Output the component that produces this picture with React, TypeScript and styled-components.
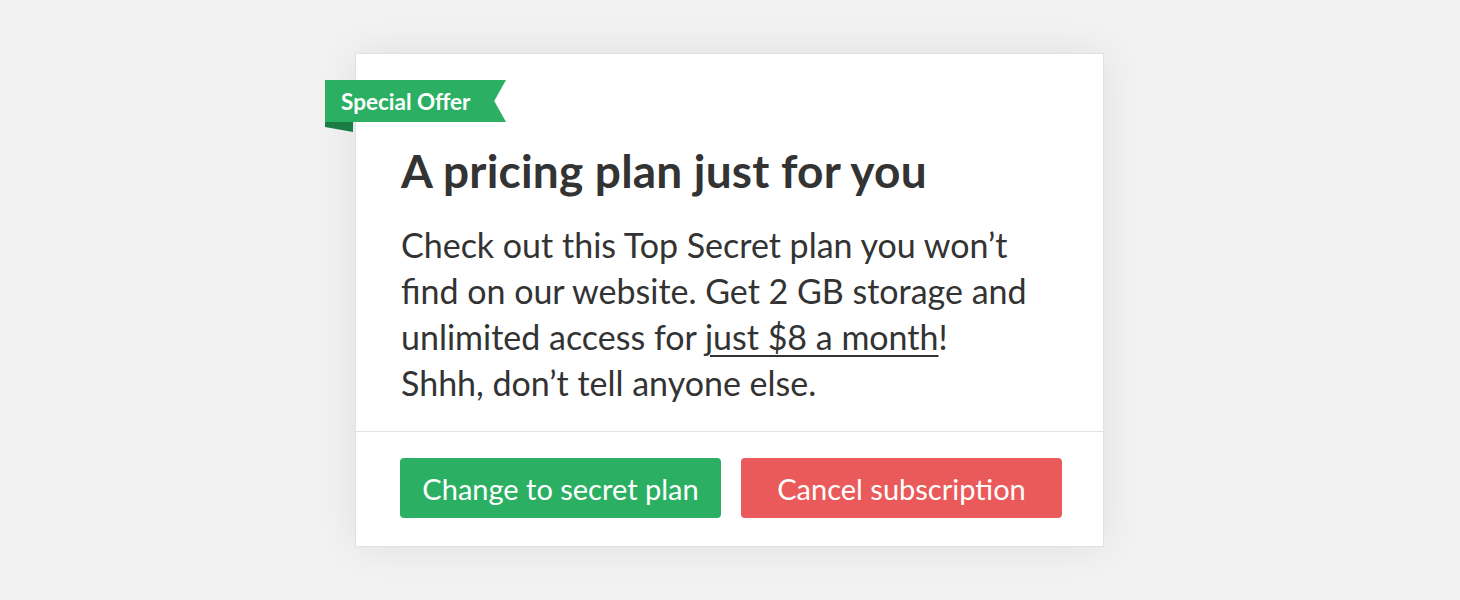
import React from "react";
import styled, { createGlobalStyle } from "styled-components";

const Global = createGlobalStyle`
  html, body { margin: 0; padding: 0; background: #f2f2f2; }
  body { font-family: Lato, "Noto Sans", sans-serif; color: #333; }
`;

const Page = styled.div`
  min-height: 600px;
  padding-right: 1px;
  display: flex;
  align-items: center;
  justify-content: center;
`;

const Card = styled.div`
  position: relative;
  box-sizing: border-box;
  width: 749px;
  height: 494px;
  background: #fff;
  border: 1px solid #e2e2e2;
  box-shadow: 0 0 40px rgba(0, 0, 0, 0.08);
  display: flex;
  flex-direction: column;
`;

const Ribbon = styled.div`
  position: absolute;
  left: -31px;
  top: 26px;
  width: 181px;
  height: 42px;
  box-sizing: border-box;
  padding-left: 16px;
  display: flex;
  align-items: center;
  color: #fff;
  font-size: 22.5px;
  font-weight: 700;
  background: #2bb063;
  clip-path: polygon(0 0, 100% 0, 93.5% 50%, 100% 100%, 0 100%);
`;

const Fold = styled.svg`
  position: absolute;
  left: -31px;
  top: 68px;
`;

const Body = styled.div`
  flex: 1;
  padding: 90px 45px 0 45px;
`;

const Title = styled.h1`
  margin: 0 0 24px;
  font-size: 46px;
  line-height: 54px;
  font-weight: 700;
  letter-spacing: 0.2px;
  color: #333;
`;

const Text = styled.p`
  margin: 0;
  font-size: 34px;
  line-height: 46px;
  letter-spacing: 0;
  color: #333;
`;

const Price = styled.span`
  text-decoration: underline;
  text-decoration-thickness: 2px;
  text-underline-offset: 5px;
`;

const Footer = styled.div`
  border-top: 1px solid #e2e2e2;
  height: 115px;
  box-sizing: border-box;
  padding: 26px 0 0 44px;
  display: flex;
  align-items: flex-start;
  gap: 20px;
`;

const Button = styled.button<{ $tone: "green" | "red" }>`
  width: 321px;
  height: 60px;
  border: none;
  border-radius: 4px;
  background: ${(p) => (p.$tone === "green" ? "#2bb063" : "#eb5a5a")};
  color: #fff;
  font-family: inherit;
  font-size: 29px;
  cursor: pointer;
`;

export default function App() {
  return (
    <>
      <Global />
      <Page>
        <Card>
          <Ribbon>Special Offer</Ribbon>
          <Fold width="28" height="10" viewBox="0 0 28 10">
            <polygon points="0,0 28,0 28,10 0,5" fill="#1a7c42" />
          </Fold>
          <Body>
            <Title>A pricing plan just for you</Title>
            <Text>
              Check out this Top Secret plan you won’t
              <br />
              find on our website. Get 2 GB storage and
              <br />
              unlimited access for <Price>just $8 a month</Price>!
              <br />
              Shhh, don’t tell anyone else.
            </Text>
          </Body>
          <Footer>
            <Button $tone="green">Change to secret plan</Button>
            <Button $tone="red">Cancel subscription</Button>
          </Footer>
        </Card>
      </Page>
    </>
  );
}
